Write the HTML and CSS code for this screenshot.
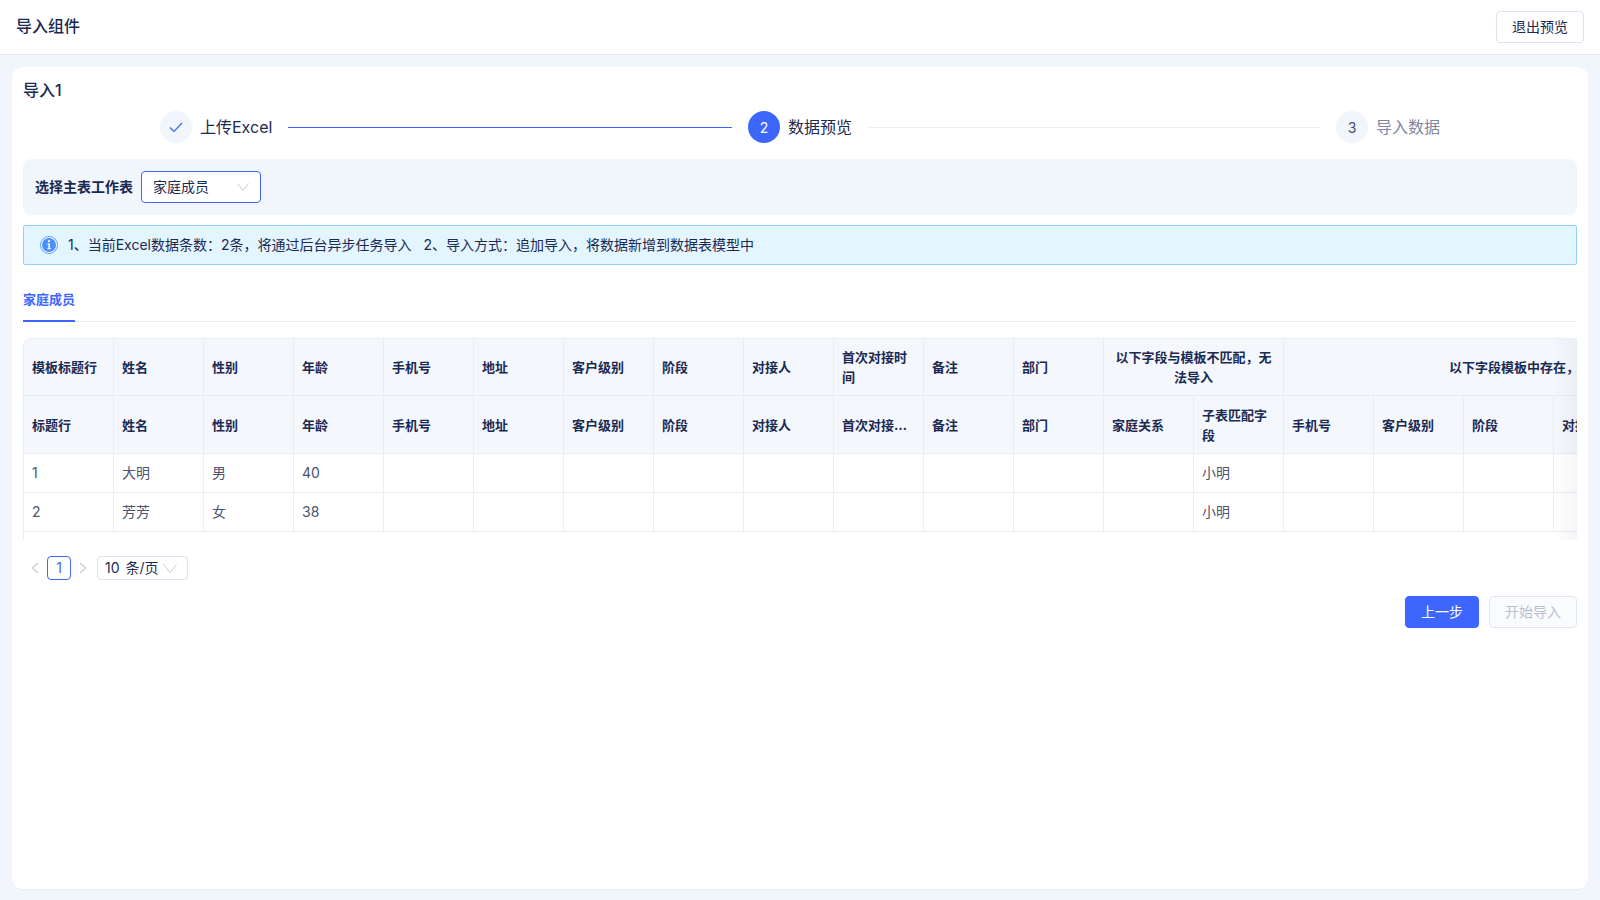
FILE: index.html
```html
<!DOCTYPE html>
<html lang="zh-CN">
<head>
    <meta charset="UTF-8">
    <title>导入组件</title>
    <link rel="stylesheet" href="styles.css">
</head>
<body>
<div class="page">
    <header class="topbar">
        <h1 class="topbar-title">导入组件</h1>
        <button class="btn btn-exit">退出预览</button>
    </header>
    <main class="main">
        <section class="card">
            <h2 class="card-title">导入1</h2>

            <div class="steps">
                <div class="step done">
                    <span class="step-dot">
                        <svg width="14" height="11" viewBox="0 0 14 11" fill="none"><path d="M1 5.500l4 4 8-8.500" stroke="#3d66ff" stroke-width="1.200"/></svg>
                    </span>
                    <span class="step-text">上传Excel</span>
                    <span class="step-line"></span>
                </div>
                <div class="step current">
                    <span class="step-dot">2</span>
                    <span class="step-text">数据预览</span>
                    <span class="step-line"></span>
                </div>
                <div class="step last">
                    <span class="step-dot">3</span>
                    <span class="step-text">导入数据</span>
                </div>
            </div>

            <div class="sheet-bar">
                <label class="sheet-label">选择主表工作表</label>
                <div class="select">
                    <span class="select-text">家庭成员</span>
                    <svg width="12" height="8" viewBox="0 0 12 8" fill="none"><path d="M.5.5L6 7.500 11.500.5" stroke="#c3cadb" stroke-width="1"/></svg>
                </div>
            </div>

            <div class="alert">
                <svg class="alert-icon" width="18" height="18" viewBox="0 0 18 18">
                    <circle cx="9" cy="9" r="8.500" fill="#fff" stroke="#5b9dff"/>
                    <circle cx="9" cy="9" r="7" fill="#4c8dff"/>
                    <circle cx="9" cy="5.200" r="1.100" fill="#fff"/>
                    <path d="M7.400 7.600h2.500v4.600h1v1.100H7.300v-1.100h1.100V8.700h-1z" fill="#fff"/>
                </svg>
                <span>1、当前Excel数据条数：2条，将通过后台异步任务导入</span>
                <span class="alert-second">2、导入方式：追加导入，将数据新增到数据表模型中</span>
            </div>

            <div class="tabs">
                <div class="tab active">家庭成员</div>
            </div>

            <div class="table-wrap">
                <table class="preview">
                    <thead>
                        <tr class="head-one">
                            <th>模板标题行</th>
                            <th>姓名</th>
                            <th>性别</th>
                            <th>年龄</th>
                            <th>手机号</th>
                            <th>地址</th>
                            <th>客户级别</th>
                            <th>阶段</th>
                            <th>对接人</th>
                            <th>首次对接时间</th>
                            <th>备注</th>
                            <th>部门</th>
                            <th class="group" colspan="2">以下字段与模板不匹配，无法导入</th>
                            <th class="group group-missing" colspan="6">以下字段模板中存在，Excel中没有</th>
                        </tr>
                        <tr class="head-two">
                            <th>标题行</th>
                            <th>姓名</th>
                            <th>性别</th>
                            <th>年龄</th>
                            <th>手机号</th>
                            <th>地址</th>
                            <th>客户级别</th>
                            <th>阶段</th>
                            <th>对接人</th>
                            <th class="ellipsis">首次对接时间</th>
                            <th>备注</th>
                            <th>部门</th>
                            <th>家庭关系</th>
                            <th>子表匹配字段</th>
                            <th>手机号</th>
                            <th>客户级别</th>
                            <th>阶段</th>
                            <th>对接人</th>
                            <th></th>
                            <th></th>
                        </tr>
                    </thead>
                    <tbody>
                        <tr>
                            <td>1</td>
                            <td>大明</td>
                            <td>男</td>
                            <td>40</td>
                            <td></td><td></td><td></td><td></td><td></td><td></td><td></td><td></td><td></td>
                            <td>小明</td>
                            <td></td><td></td><td></td><td></td><td></td><td></td>
                        </tr>
                        <tr>
                            <td>2</td>
                            <td>芳芳</td>
                            <td>女</td>
                            <td>38</td>
                            <td></td><td></td><td></td><td></td><td></td><td></td><td></td><td></td><td></td>
                            <td>小明</td>
                            <td></td><td></td><td></td><td></td><td></td><td></td>
                        </tr>
                    </tbody>
                </table>
                <div class="table-fade"></div>
            </div>

            <div class="pager">
                <span class="pager-arrow">
                    <svg width="8" height="12" viewBox="0 0 8 12" fill="none"><path d="M7 1L1.500 6 7 11" stroke="#c5cbdb" stroke-width="1.200"/></svg>
                </span>
                <span class="pager-num">1</span>
                <span class="pager-arrow">
                    <svg width="8" height="12" viewBox="0 0 8 12" fill="none"><path d="M1 1l5.500 5L1 11" stroke="#c5cbdb" stroke-width="1.200"/></svg>
                </span>
                <div class="pager-size">
                    <span class="select-text size-text">10 条/页</span>
                    <svg width="14" height="9" viewBox="0 0 14 9" fill="none"><path d="M.5.5L7 8.500 13.500.5" stroke="#c3cadb" stroke-width="1"/></svg>
                </div>
            </div>

            <div class="actions">
                <button class="btn btn-primary">上一步</button>
                <button class="btn btn-disabled">开始导入</button>
            </div>
        </section>
    </main>
</div>
</body>
</html>
```

FILE: styles.css
```css
*{
    margin:0;
    padding:0;
    box-sizing:border-box;
}
html,body{
    height:100%;
}
body{
    font-family:Inter,"Noto Sans CJK SC",sans-serif;
    font-size:14px;
    color:#1b2a52;
    background:#f1f5fc;
}
.page{
    height:900px;
    display:flex;
    flex-direction:column;
    overflow:hidden;
}

/* top bar */
.topbar{
    height:55px;
    flex:none;
    display:flex;
    align-items:center;
    justify-content:space-between;
    padding:0 16px;
    background:#fff;
    border-bottom:1px solid #e8ebf2;
}
.topbar-title{
    font-size:16px;
    font-weight:500;
    line-height:22px;
    padding-bottom:2px;
}
.btn{
    height:32px;
    border-radius:4px;
    font-family:inherit;
    font-size:14px;
    line-height:20px;
    background:#fff;
    border:1px solid #dde2ee;
    color:#1b2a52;
}
.btn-exit{
    width:88px;
}
.btn-primary{
    width:74px;
    background:#3d66ff;
    border-color:#3d66ff;
    color:#fff;
}
.btn-disabled{
    width:88px;
    background:#fafbfd;
    border-color:#e2e6f0;
    color:#b9c0d2;
}

.main{
    flex:1;
    min-height:0;
    padding:12px 12px 10px;
}
.card{
    height:100%;
    padding:12px 11px;
    background:#fff;
    border-radius:10px;
    border-bottom:1px solid #e6eaf3;
}
.card-title{
    font-size:16px;
    font-weight:500;
    line-height:22px;
}

/* steps */
.steps{
    display:flex;
    margin-top:10px;
    padding:0 137px;
}
.step{
    flex:1;
    display:flex;
    align-items:center;
}
.step.last{
    flex:none;
}
.step-dot{
    width:32px;
    height:32px;
    flex:none;
    display:flex;
    align-items:center;
    justify-content:center;
    border-radius:50%;
    background:#f1f5fc;
    font-size:14px;
    color:#44506f;
}
.step-text{
    margin-left:8px;
    font-size:16px;
    line-height:22px;
    white-space:nowrap;
}
.step-line{
    flex:1;
    height:1px;
    margin:0 16px;
    background:#eceff5;
}
.step.done .step-line{
    background:#3d66ff;
}
.step.current .step-dot{
    background:#3d66ff;
    color:#fff;
}
.step.last .step-text{
    color:#7d87a1;
}

/* sheet bar */
.sheet-bar{
    display:flex;
    align-items:center;
    height:56px;
    margin-top:16px;
    padding:0 12px;
    background:#f1f5fc;
    border-radius:8px;
}
.sheet-label{
    font-size:14px;
    font-weight:700;
    margin-right:8px;
    padding-bottom:2px;
}
.select{
    width:120px;
    height:32px;
    display:flex;
    align-items:center;
    justify-content:space-between;
    padding:0 11px;
    background:#fff;
    border:1px solid #3d66ff;
    border-radius:4px;
}
.select-text{
    padding-bottom:2px;
}

/* alert */
.alert{
    display:flex;
    align-items:center;
    height:40px;
    margin-top:10px;
    padding:0 16px;
    background:#e3f5ff;
    border:1px solid #8ed0ff;
    border-radius:2px;
    line-height:20px;
}
.alert-icon{
    margin-right:10px;
}
.alert-second{
    margin-left:12px;
}

/* tabs */
.tabs{
    display:flex;
    margin-top:16px;
    border-bottom:1px solid #e8ebf2;
}
.tab{
    padding:8px 0 11px;
    font-size:13px;
    font-weight:700;
    line-height:20px;
    margin-bottom:-1px;
}
.tab.active{
    color:#3d66ff;
    border-bottom:2px solid #3d66ff;
}

/* table */
.table-wrap{
    position:relative;
    height:202px;
    margin-top:16px;
    overflow:hidden;
    border-top:1px solid #e9edf5;
    border-left:1px solid #e9edf5;
    border-top-left-radius:8px;
}
.preview{
    width:1800px;
    table-layout:fixed;
    border-collapse:separate;
    border-spacing:0;
}
.preview th,.preview td{
    padding:0 8px;
    line-height:20px;
    text-align:left;
    border-right:1px solid #e9edf5;
    border-bottom:1px solid #e9edf5;
}
.preview th{
    background:#f4f7fc;
    font-size:13px;
    font-weight:700;
    color:#1b2a52;
}
.preview td{
    height:39px;
    color:#4b5470;
}
.head-one th{
    height:57px;
}
.head-two th{
    height:58px;
}
.preview th.group{
    text-align:center;
}
.preview th.group-missing{
    padding-right:14px;
}
.preview th.ellipsis{
    white-space:nowrap;
    overflow:hidden;
    text-overflow:ellipsis;
}
.table-fade{
    position:absolute;
    top:0;
    right:0;
    bottom:0;
    width:24px;
    background:linear-gradient(to right,rgba(60,70,110,0),rgba(60,70,110,.05));
}

/* pagination */
.pager{
    display:flex;
    align-items:center;
    height:24px;
    margin-top:16px;
}
.pager-arrow{
    width:24px;
    height:24px;
    display:flex;
    align-items:center;
    justify-content:center;
}
.pager-num{
    width:24px;
    height:24px;
    border:1px solid #3d66ff;
    border-radius:4px;
    text-align:center;
    line-height:21px;
    color:#3d66ff;
}
.pager-size{
    width:91px;
    height:24px;
    margin-left:2px;
    display:flex;
    align-items:center;
    justify-content:space-between;
    padding:0 10px 0 7px;
    border:1px solid #dde2ee;
    border-radius:4px;
}
.size-text{
    word-spacing:2px;
}

.actions{
    display:flex;
    justify-content:flex-end;
    gap:10px;
    margin-top:16px;
}
```
